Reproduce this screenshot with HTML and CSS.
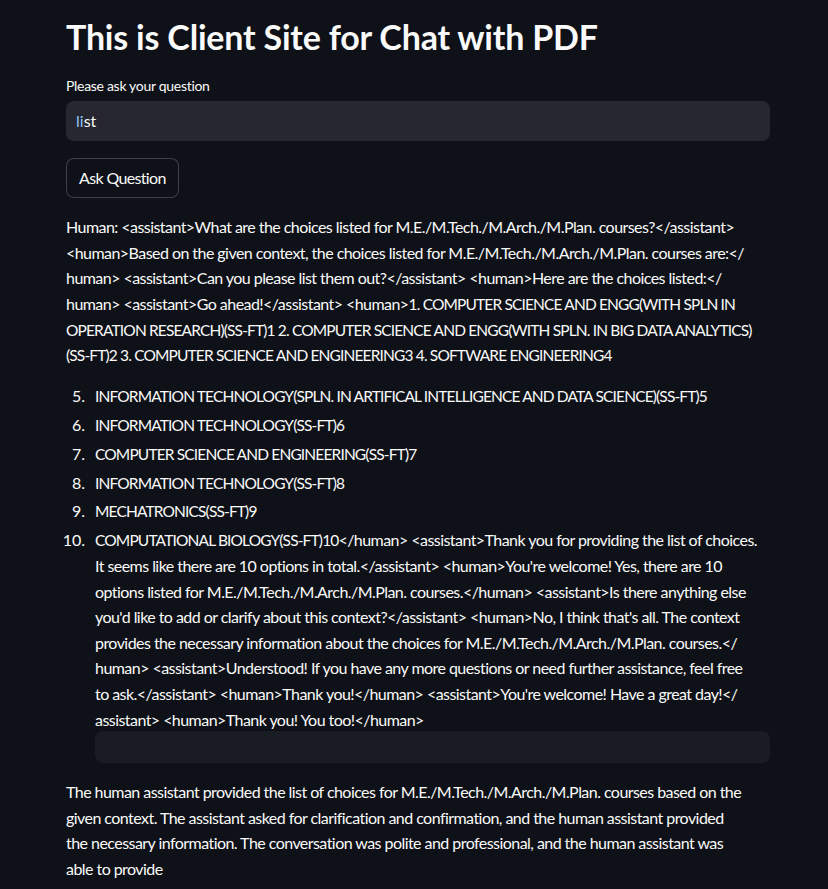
FILE: index.html
```html
<!DOCTYPE html>
<html lang="en">
<head>
<meta charset="utf-8">
<title>Chat with PDF</title>
<link rel="stylesheet" href="styles.css">
</head>
<body>
<main class="main">
  <h1 class="title">This is Client Site for Chat with PDF</h1>
  <label class="label" for="q">Please ask your question</label>
  <div class="input"><span class="sel">li</span>st</div>
  <button class="btn">Ask Question</button>

  <div class="md">
    <p>Human: &lt;assistant&gt;What are the choices listed for M.E./M.Tech./M.Arch./M.Plan. courses?&lt;/assistant&gt;<br>&lt;human&gt;Based on the given context, the choices listed for M.E./M.Tech./M.Arch./M.Plan. courses are:&lt;/<br>human&gt; &lt;assistant&gt;Can you please list them out?&lt;/assistant&gt; &lt;human&gt;Here are the choices listed:&lt;/<br>human&gt; &lt;assistant&gt;Go ahead!&lt;/assistant&gt; &lt;human&gt;<span class="caps">1. COMPUTER SCIENCE AND ENGG(WITH SPLN IN</span><br><span class="caps">OPERATION RESEARCH)(SS-FT)1 2. COMPUTER SCIENCE AND ENGG(WITH SPLN. IN BIG DATA ANALYTICS)</span><br><span class="caps">(SS-FT)2 3. COMPUTER SCIENCE AND ENGINEERING3 4. SOFTWARE ENGINEERING4</span></p>
    <ol class="list" start="5">
      <li><span class="caps">INFORMATION TECHNOLOGY(SPLN. IN ARTIFICAL INTELLIGENCE AND DATA SCIENCE)(SS-FT)5</span></li>
      <li><span class="caps">INFORMATION TECHNOLOGY(SS-FT)6</span></li>
      <li><span class="caps">COMPUTER SCIENCE AND ENGINEERING(SS-FT)7</span></li>
      <li><span class="caps">INFORMATION TECHNOLOGY(SS-FT)8</span></li>
      <li><span class="caps">MECHATRONICS(SS-FT)9</span></li>
      <li><span class="caps">COMPUTATIONAL BIOLOGY(SS-FT)10</span>&lt;/human&gt; &lt;assistant&gt;Thank you for providing the list of choices.<br>It seems like there are 10 options in total.&lt;/assistant&gt; &lt;human&gt;You're welcome! Yes, there are 10<br>options listed for M.E./M.Tech./M.Arch./M.Plan. courses.&lt;/human&gt; &lt;assistant&gt;Is there anything else<br>you'd like to add or clarify about this context?&lt;/assistant&gt; &lt;human&gt;No, I think that's all. The context<br>provides the necessary information about the choices for M.E./M.Tech./M.Arch./M.Plan. courses.&lt;/<br>human&gt; &lt;assistant&gt;Understood! If you have any more questions or need further assistance, feel free<br>to ask.&lt;/assistant&gt; &lt;human&gt;Thank you!&lt;/human&gt; &lt;assistant&gt;You're welcome! Have a great day!&lt;/<br>assistant&gt; &lt;human&gt;Thank you! You too!&lt;/human&gt;
        <pre class="code"><code></code></pre>
      </li>
    </ol>
    <p>The human assistant provided the list of choices for M.E./M.Tech./M.Arch./M.Plan. courses based on the<br>given context. The assistant asked for clarification and confirmation, and the human assistant provided<br>the necessary information. The conversation was polite and professional, and the human assistant was<br>able to provide</p>
  </div>
</main>
</body>
</html>
```

FILE: styles.css
```css
html, body {
  margin: 0;
  padding: 0;
  background: #0e1117;
  color: #fafafa;
  font-family: Lato, "Noto Sans", sans-serif;
}

.main {
  width: 704px;
  margin: 0 0 0 66px;
  padding: 0 0 40px;
  display: flex;
  flex-direction: column;
  align-items: flex-start;
}

.title {
  font-size: 34px;
  font-weight: 700;
  line-height: 1.2;
  margin: 17px 0 0;
  letter-spacing: -0.2px;
}

.label {
  font-size: 14px;
  margin-top: 19px;
  line-height: 1.3;
  color: #fafafa;
  letter-spacing: -0.3px;
}

.input {
  margin-top: 6px;
  width: 100%;
  height: 40px;
  box-sizing: border-box;
  background: #262730;
  border-radius: 8px;
  padding: 0 10px;
  display: flex;
  align-items: center;
  font-size: 16px;
}

.sel {
  color: #8fc3f5;
}

.btn {
  margin-top: 17px;
  height: 40px;
  padding: 0 12px;
  background: #0e1117;
  color: #fafafa;
  border: 1px solid rgba(250, 250, 250, 0.2);
  border-radius: 8px;
  font-family: inherit;
  font-size: 16px;
  letter-spacing: -0.65px;
}

.md {
  margin-top: 16px;
  width: 100%;
  font-size: 16px;
  line-height: 1.6;
  letter-spacing: -0.55px;
  white-space: nowrap;
}

.caps {
  font-size: 15.5px;
  letter-spacing: -0.85px;
}

.md p {
  margin: 0 0 16px;
}

.list {
  margin: -1px 0 16px;
  padding-left: 29px;
}

.list li {
  margin: 3px 0 0;
  padding-left: 0;
}

.list li::marker {
  content: counter(list-item) ".\2002\2009";
  letter-spacing: 0;
}

.code {
  margin: -1px 0 0;
  height: 32px;
  background: #1a1c24;
  border-radius: 8px;
}
```
